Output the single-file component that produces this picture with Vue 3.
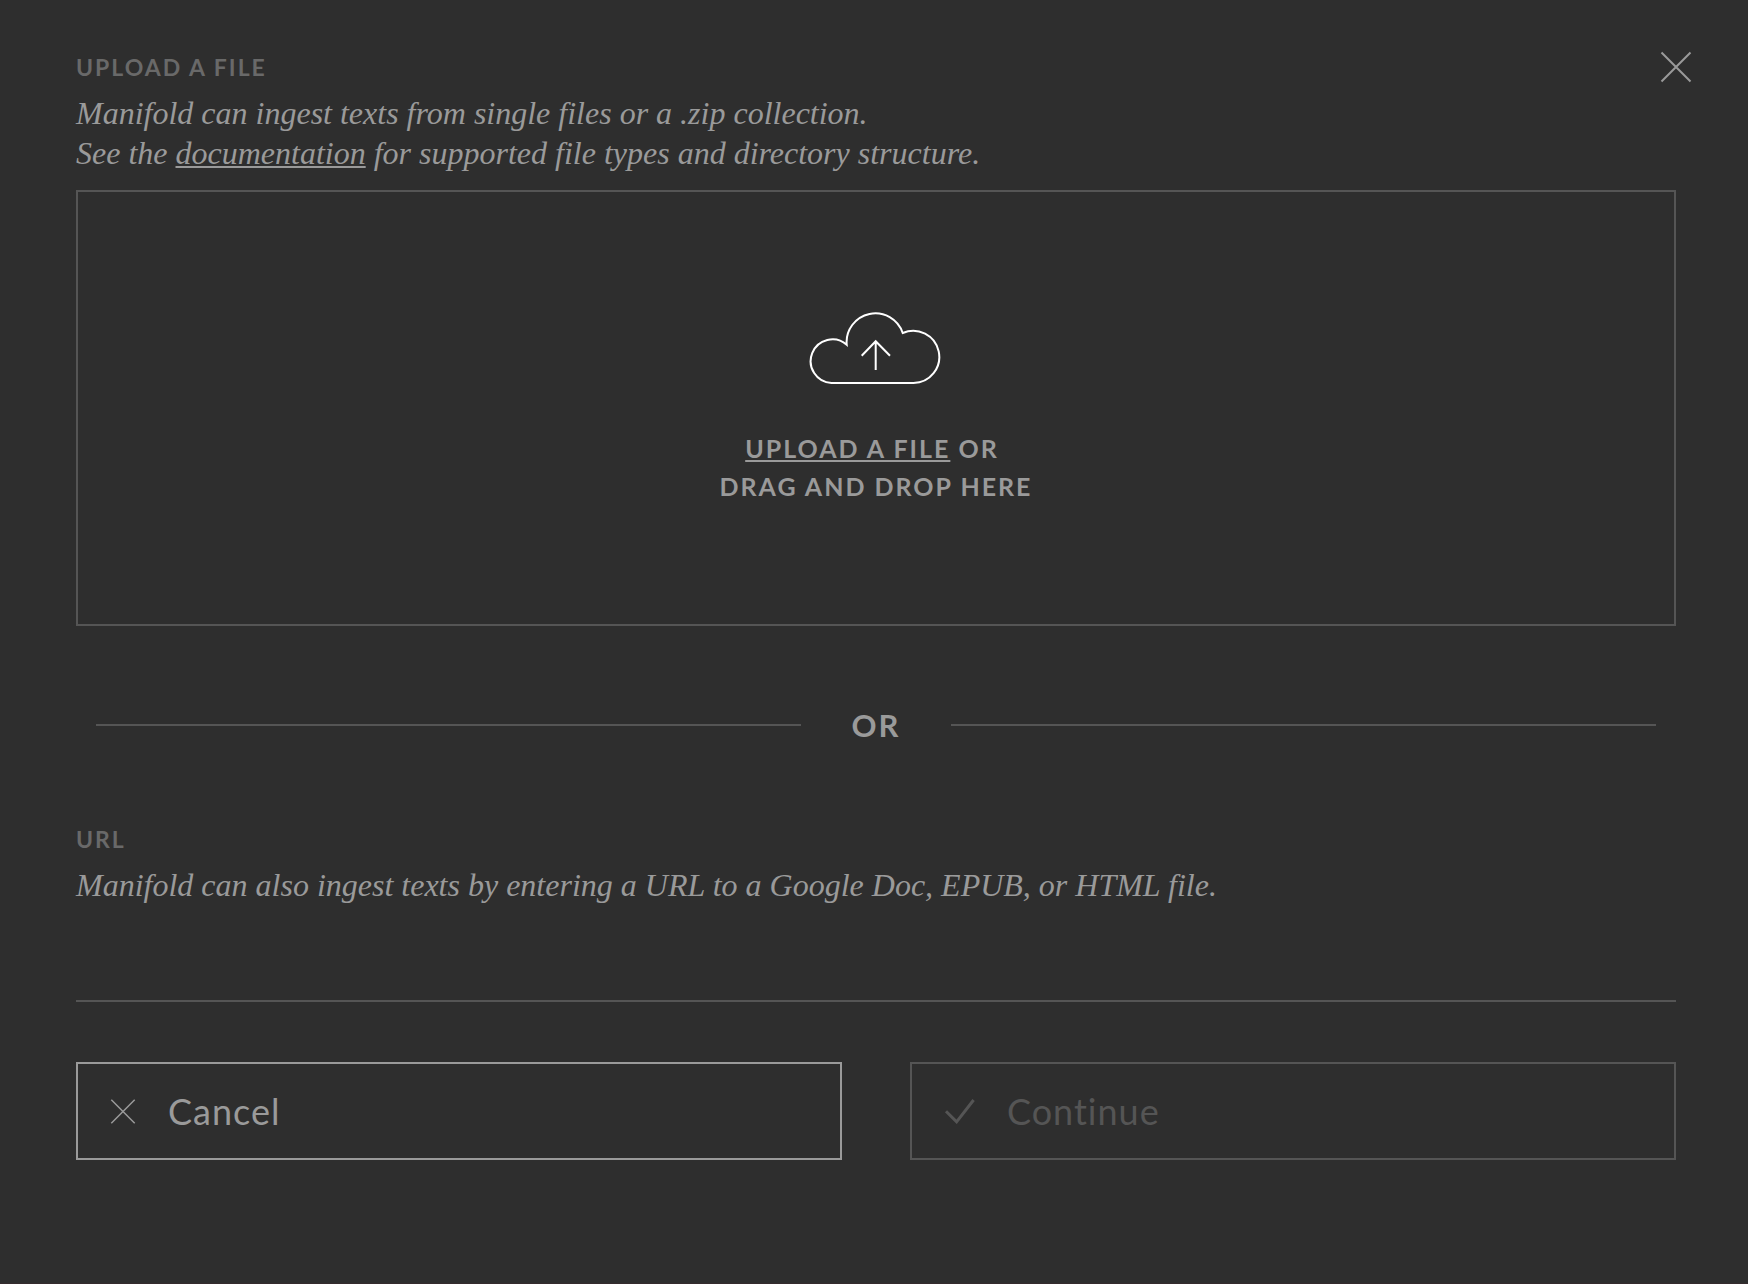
<script setup>
import { ref } from 'vue'

const url = ref('')
</script>

<template>
  <main class="drawer">
    <form class="ingest" @submit.prevent>
      <button type="button" class="close" aria-label="Close">
        <svg width="32" height="32" viewBox="0 0 32 32" aria-hidden="true">
          <path d="M1.5 1.5 30.5 30.5M30.5 1.5 1.5 30.5" />
        </svg>
      </button>

      <section class="field">
        <h2 class="label">Upload a file</h2>
        <p class="instructions">
          Manifold can ingest texts from single files or a .zip collection.<br />
          See the <a href="#documentation">documentation</a> for supported file types and directory structure.
        </p>
        <label class="dropzone" for="source-file">
          <input id="source-file" class="file-input" type="file" />
          <svg class="cloud" width="134" height="74" viewBox="0 0 134 74" aria-hidden="true">
            <path d="M22.5 72A21.8 21.8 0 1 1 37.7 33.7A28.8 28.8 0 0 1 93.7 22A26.1 26.1 0 1 1 104.5 72Z" />
            <path d="M66.7 59V30M52.7 44.7 66.7 30.2 81 44.7" />
          </svg>
          <span class="drop-text">
            <span class="underlined">Upload a file</span> or&nbsp;<br />drag and drop here
          </span>
        </label>
      </section>

      <div class="divider"><span>Or</span></div>

      <section class="field">
        <label class="label" for="source-url">URL</label>
        <p id="url-help" class="instructions">
          Manifold can also ingest texts by entering a URL to a Google Doc, EPUB, or HTML file.
        </p>
        <input id="source-url" v-model="url" class="url-input" type="text" aria-describedby="url-help" />
      </section>

      <div class="actions">
        <button type="button" class="action">
          <svg width="26" height="26" viewBox="0 0 26 26" aria-hidden="true">
            <path class="thin" d="M1.3 1.8 24.7 25.2M24.7 1.8 1.3 25.2" />
          </svg>
          <span>Cancel</span>
        </button>
        <button type="submit" class="action" disabled>
          <svg width="31" height="26" viewBox="0 0 31 26" aria-hidden="true">
            <path class="bold" d="M2 13.2 12.6 23.8 29.6 2" />
          </svg>
          <span>Continue</span>
        </button>
      </div>
    </form>
  </main>
</template>

<style>
body {
  margin: 0;
  background: #2e2e2e;
}
</style>

<style scoped>
.drawer {
  box-sizing: border-box;
  min-height: 100vh;
  padding: 51px 72px 64px 76px;
  border-bottom: 1px solid #352b2d;
  background: #2e2e2e;
  color: #9a9a9a;
  font-family: Lato, "Open Sans", sans-serif;
}

.ingest {
  position: relative;
}

svg {
  display: block;
  flex: none;
  fill: none;
  stroke: currentColor;
  stroke-width: 2;
}

.thin {
  stroke-width: 1.5;
}

.bold {
  stroke-width: 3;
}

.close {
  position: absolute;
  top: 0;
  right: -16px;
  padding: 0;
  border: 0;
  background: none;
  color: inherit;
  cursor: pointer;
}

.label {
  display: block;
  margin: 0 0 10px;
  color: #696969;
  font-size: 23px;
  font-weight: 700;
  line-height: 32px;
  letter-spacing: 2px;
  text-transform: uppercase;
}

.instructions {
  margin: 0;
  font-family: "Liberation Serif", serif;
  font-size: 32px;
  font-style: italic;
  line-height: 40px;
}

.instructions a {
  color: inherit;
}

.instructions a,
.underlined {
  text-decoration: underline;
  text-decoration-thickness: 2px;
  text-decoration-skip-ink: none;
  text-underline-offset: 2px;
}

.dropzone {
  position: relative;
  box-sizing: border-box;
  display: flex;
  flex-direction: column;
  align-items: center;
  gap: 44px;
  min-height: 436px;
  margin-top: 17px;
  padding: 119px 24px;
  border: 2px solid #555;
  cursor: pointer;
}

.file-input {
  position: absolute;
  width: 1px;
  height: 1px;
  opacity: 0;
}

.cloud {
  color: #fff;
}

.drop-text {
  font-size: 25px;
  font-weight: 700;
  line-height: 38px;
  letter-spacing: 2px;
  text-align: center;
  text-transform: uppercase;
}

.divider {
  display: flex;
  align-items: center;
  margin: 79px 20px 78px;
  font-size: 31px;
  font-weight: 700;
  line-height: 40px;
  letter-spacing: 2px;
  text-transform: uppercase;
}

.divider::before,
.divider::after {
  content: "";
  flex: 1;
  height: 2px;
  background: #555;
}

.divider span {
  width: 150px;
  text-align: center;
}

.url-input {
  display: block;
  box-sizing: border-box;
  width: 100%;
  height: 78px;
  margin-top: 19px;
  padding: 16px 0 0;
  border: 0;
  border-bottom: 2px solid #555;
  border-radius: 0;
  outline: 0;
  background: none;
  color: inherit;
  font: inherit;
  font-size: 32px;
}

.actions {
  display: grid;
  grid-template-columns: 1fr 1fr;
  gap: 68px;
  margin-top: 60px;
}

.action {
  display: flex;
  align-items: center;
  gap: 32px;
  height: 98px;
  padding: 0 32px;
  border: 2px solid #9a9a9a;
  background: none;
  color: #9a9a9a;
  font: inherit;
  font-size: 36px;
  line-height: 44px;
  letter-spacing: 1px;
  cursor: pointer;
}

.action:disabled {
  border-color: #555;
  color: #555;
  cursor: default;
}
</style>
